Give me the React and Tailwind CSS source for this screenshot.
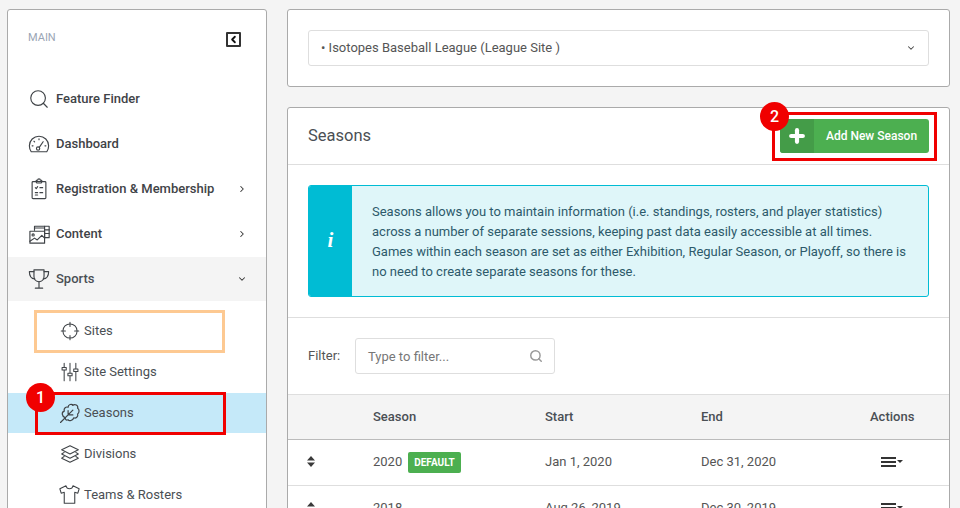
import React from 'react';
import { ChevronRight, ChevronDown, ChevronLeft, Search, Plus } from 'lucide-react';

const Stroke = ({ children, className = 'w-[22px] h-[22px]', box = '0 0 24 24' }) => (
    <svg viewBox={box} fill="none" stroke="#3f4347" strokeWidth="1.25" strokeLinecap="round" strokeLinejoin="round" className={className}>
        {children}
    </svg>
);

const sub = 'w-[20px] h-[20px]';

const GaugeIcon = () => (
    <Stroke>
        <path d="M3.500 20.500h17c1.200-1.800 2-4 2-6.500a10.500 10.500 0 0 0-21 0c0 2.500.8 4.700 2 6.500z" />
        <circle cx="11" cy="17" r="1.800" />
        <path d="M12.300 15.700l4.200-6.200M12 6.300v1M6.500 9l.7.7M4.500 14h1M18.500 14h1" />
    </Stroke>
);

const ClipboardIcon = () => (
    <Stroke>
        <rect x="4.500" y="4" width="15" height="18.500" rx="1" />
        <path d="M9 4V2.500h1.500a1.500 1.500 0 0 1 3 0H15V4c0 1-.5 1.500-1 1.500h-4C9.500 5.500 9 5 9 4z" />
        <path d="M8 10.500l1 1 1.500-2M13 10.500h3M8 16h2.500M13 16h3M8 18.500h2.500" />
    </Stroke>
);

const ContentIcon = () => (
    <Stroke className="w-[24px] h-[22px]">
        <path d="M6 8V3.500h16v12.500h-5" />
        <path d="M17 3.500V16M17 7.500h5M17 11.500h5M6 5.500h11" />
        <rect x="1" y="9" width="16" height="13" />
        <circle cx="4.500" cy="13" r="1.200" />
        <path d="M1 20l5-3.500 3 2 5-5 3 3" />
    </Stroke>
);

const TrophyIcon = () => (
    <Stroke>
        <path d="M6.500 2h11v7c0 3.500-2.300 6-5.500 6S6.500 12.500 6.500 9z" />
        <path d="M6.500 4H1.500c0 5 1.800 7.500 6 8M17.500 4h5c0 5-1.800 7.500-6 8" />
        <path d="M12 15v6M8 22h8" />
    </Stroke>
);

const TargetIcon = () => (
    <Stroke className={sub}>
        <circle cx="12" cy="12" r="8.500" />
        <path d="M12 1.500v5M12 17.500v5M1.500 12h5M17.500 12h5" />
    </Stroke>
);

const SlidersIcon = () => (
    <Stroke className={sub}>
        <path d="M5 1.500v21M12 1.500v21M19 1.500v21" />
        <rect x="2.500" y="6.500" width="5" height="3" fill="#fff" />
        <rect x="9.500" y="13.500" width="5" height="3" fill="#fff" />
        <rect x="16.500" y="8.500" width="5" height="3" fill="#fff" />
    </Stroke>
);

const LeafIcon = () => (
    <Stroke className={sub} box="1.500 1.500 21 21">
        <path d="M7 17C3 15 3 11 6 10 5 7 8 5 10 6c0-3 4-4 5-2 2-2 6 0 5 3 2 1 2 5 0 6 1 3-2 5-4 4-1 3-5 4-6 2-2 1-3 0-3-2z" />
        <path d="M2 22L15 9M10 14v-4.500M10 14h5" />
    </Stroke>
);

const LayersIcon = () => (
    <Stroke className={sub}>
        <path d="M12 2L2 7l10 5 10-5z" />
        <path d="M5 10l-3 2 10 5 10-5-3-2" />
        <path d="M5 15l-3 2 10 5 10-5-3-2" />
    </Stroke>
);

const ShirtIcon = () => (
    <Stroke className="w-[21px] h-[21px] -ml-[1px]">
        <path d="M8 2L1 5.500l1.500 5 3.500-1V22h12V9.500l3.500 1 1.500-5L16 2c-.5 2.500-2 3.500-4 3.500S8.500 4.500 8 2z" />
    </Stroke>
);

const NavItem = ({ icon, label, arrow, open }) => (
    <div className={`flex items-center pl-[20px] pr-[19px] ${open ? 'h-[44px] mt-[1px] bg-[#f4f4f4] text-[#4a4f54]' : 'h-[45px] text-[#3f4347]'}`}>
        <div className="w-[28px] flex items-center">{icon}</div>
        <span className="text-[13px] font-medium flex-1">{label}</span>
        {arrow === 'right' && <ChevronRight className="w-[10px] h-[10px] text-[#333]" strokeWidth={2.500} />}
        {arrow === 'down' && <ChevronDown className="w-[10px] h-[10px] text-[#333]" strokeWidth={2.500} />}
    </div>
);

const SubItem = ({ icon, label, active }) => (
    <div className={`flex items-center pl-[52px] ${active ? 'h-[40px] mt-[1px] bg-[#c5e9f9]' : 'h-[41px]'}`}>
        <div className="w-[24px] flex items-center">{icon}</div>
        <span className="text-[13px] text-[#4a4f54]">{label}</span>
    </div>
);

const Row = ({ season, start, end, isDefault }) => (
    <div className="h-[46px] shrink-0 grid grid-cols-[85px_172px_156px_1fr_44px] items-center border-b border-[#dedede] pr-[35px] pb-[2px] text-[13px] text-[#555]">
        <div className="pl-[19px]">
            <svg viewBox="0 0 8 11" className="w-[8px] h-[11px]" fill="#3a3a3a">
                <path d="M4 0l4 4.500H0zM4 11L0 6.500h8z" />
            </svg>
        </div>
        <div className="flex items-center gap-[6px]">
            {season}
            {isDefault && (
                <span className="h-[21px] mt-[2px] px-[6px] flex items-center rounded-[2px] bg-[#4caf50] text-white text-[10px] font-bold">DEFAULT</span>
            )}
        </div>
        <div>{start}</div>
        <div>{end}</div>
        <div className="flex items-center justify-center gap-[1px]">
            <div className="w-[15px] flex flex-col gap-[2px]">
                <div className="h-[2px] bg-[#333]" />
                <div className="h-[2px] bg-[#333]" />
                <div className="h-[2px] bg-[#333]" />
            </div>
            <div className="border-x-[3px] border-x-transparent border-t-[3px] border-t-[#333]" />
        </div>
    </div>
);

export default function App() {
    return (
        <div className="relative h-[508px] overflow-hidden bg-[#f4f4f4] flex items-start pt-[9px] pl-[7px] pr-[10px] gap-[20px] font-['Roboto',sans-serif]">
            {/* sidebar */}
            <aside className="w-[260px] h-[520px] shrink-0 bg-white border border-[#aaa] rounded-[3px]">
                <div className="h-[66px] flex items-start justify-between pl-[20px] pr-[25px] pt-[21px]">
                    <span className="text-[11px] leading-[13px] text-[#9aa5b5]">MAIN</span>
                    <div className="w-[15px] h-[15px] mt-[1px] border-2 border-[#333] rounded-[1px] flex items-center justify-center">
                        <ChevronLeft className="w-[11px] h-[11px] text-[#111]" strokeWidth={4} />
                    </div>
                </div>
                <NavItem icon={<Search className="w-[22px] h-[22px] text-[#3f4347]" strokeWidth={1.25} />} label="Feature Finder" />
                <NavItem icon={<GaugeIcon />} label="Dashboard" />
                <NavItem icon={<ClipboardIcon />} label="Registration & Membership" arrow="right" />
                <NavItem icon={<ContentIcon />} label="Content" arrow="right" />
                <NavItem icon={<TrophyIcon />} label="Sports" arrow="down" open />
                <div className="pt-[9px]">
                    <SubItem icon={<TargetIcon />} label="Sites" />
                    <SubItem icon={<SlidersIcon />} label="Site Settings" />
                    <SubItem icon={<LeafIcon />} label="Seasons" active />
                    <SubItem icon={<LayersIcon />} label="Divisions" />
                    <SubItem icon={<ShirtIcon />} label="Teams & Rosters" />
                </div>
            </aside>

            {/* main column */}
            <main className="flex-1 flex flex-col gap-[20px] min-w-0">
                <div className="h-[78px] shrink-0 bg-white border border-[#aaa] rounded-[3px] px-[20px] pt-[20px]">
                    <div className="h-[36px] border border-[#dedede] rounded-[3px] flex items-center justify-between pl-[12px] pr-[12px] text-[13px] text-[#555]">
                        <span>• Isotopes Baseball League (League Site )</span>
                        <ChevronDown className="w-[10px] h-[10px] text-[#444]" strokeWidth={2.500} />
                    </div>
                </div>

                <div className="h-[420px] shrink-0 bg-white border border-[#aaa] rounded-[3px] flex flex-col">
                    <div className="h-[57px] shrink-0 flex items-center justify-between pl-[20px] pr-[20px] border-b border-[#dedede]">
                        <h2 className="text-[16.500px] text-[#4a4f54] mt-[1px]">Seasons</h2>
                        <button className="w-[149px] h-[34px] rounded-[3px] bg-[#4caf50] flex items-center overflow-hidden">
                            <span className="w-[34px] h-full bg-[#449c48] flex items-center justify-center">
                                <Plus className="w-[20px] h-[20px] text-white" strokeWidth={5} />
                            </span>
                            <span className="flex-1 text-white text-[12px] font-medium text-center">Add New Season</span>
                        </button>
                    </div>

                    <div className="h-[153px] shrink-0 px-[20px] pt-[20px] border-b border-[#dedede]">
                        <div className="h-[112px] flex rounded-[3px] border border-[#00bcd4] bg-[#dff6f9] overflow-hidden">
                            <div className="w-[43px] shrink-0 bg-[#00bcd4] flex items-center justify-center">
                                <span className="text-white text-[21px] font-bold italic font-['Liberation_Serif',serif]">i</span>
                            </div>
                            <p className="pl-[20px] pr-[20px] pt-[16px] text-[13px] leading-[20px] text-[#2d5a6b]">
                                Seasons allows you to maintain information (i.e. standings, rosters, and player statistics) across a number of separate sessions, keeping past data easily accessible at all times. Games within each season are set as either Exhibition, Regular Season, or Playoff, so there is no need to create separate seasons for these.
                            </p>
                        </div>
                    </div>

                    <div className="h-[76px] shrink-0 flex items-center pl-[20px] gap-[15px]">
                        <span className="w-[32px] text-[13px] text-[#555]">Filter:</span>
                        <div className="w-[200px] h-[36px] border border-[#dedede] rounded-[3px] flex items-center justify-between pl-[12px] pr-[11px]">
                            <span className="text-[13px] text-[#777] pt-[1px]">Type to filter...</span>
                            <Search className="w-[14px] h-[14px] text-[#999]" strokeWidth={2.500} />
                        </div>
                    </div>

                    <div className="h-[46px] shrink-0 grid grid-cols-[85px_172px_156px_1fr_44px] items-center bg-[#f4f4f4] border-y border-t-[#dedede] border-b-[#bbb] pr-[35px] text-[13px] text-[#4a4f54]">
                        <div />
                        <div className="font-medium">Season</div>
                        <div className="font-medium">Start</div>
                        <div className="font-medium">End</div>
                        <div className="font-medium">Actions</div>
                    </div>
                    <Row season="2020" start="Jan 1, 2020" end="Dec 31, 2020" isDefault />
                    <Row season="2018" start="Aug 26, 2019" end="Dec 30, 2019" />
                </div>
            </main>

            {/* tutorial annotations painted over the page */}
            <div className="absolute left-[34px] top-[310px] w-[191px] h-[43px] border-[3px] border-[#fdc992]" />
            <div className="absolute left-[35px] top-[392px] w-[191px] h-[43px] border-[3px] border-[#f00000]" />
            <div className="absolute left-[26px] top-[383px] w-[29px] h-[29px] rounded-full bg-[#f00000] text-white text-[16px] font-medium flex items-center justify-center">1</div>
            <div className="absolute left-[772px] top-[112px] w-[165px] h-[49px] border-[3px] border-[#f00000]" />
            <div className="absolute left-[760px] top-[102px] w-[29px] h-[29px] rounded-full bg-[#f00000] text-white text-[16px] font-medium flex items-center justify-center">2</div>
        </div>
    );
}
